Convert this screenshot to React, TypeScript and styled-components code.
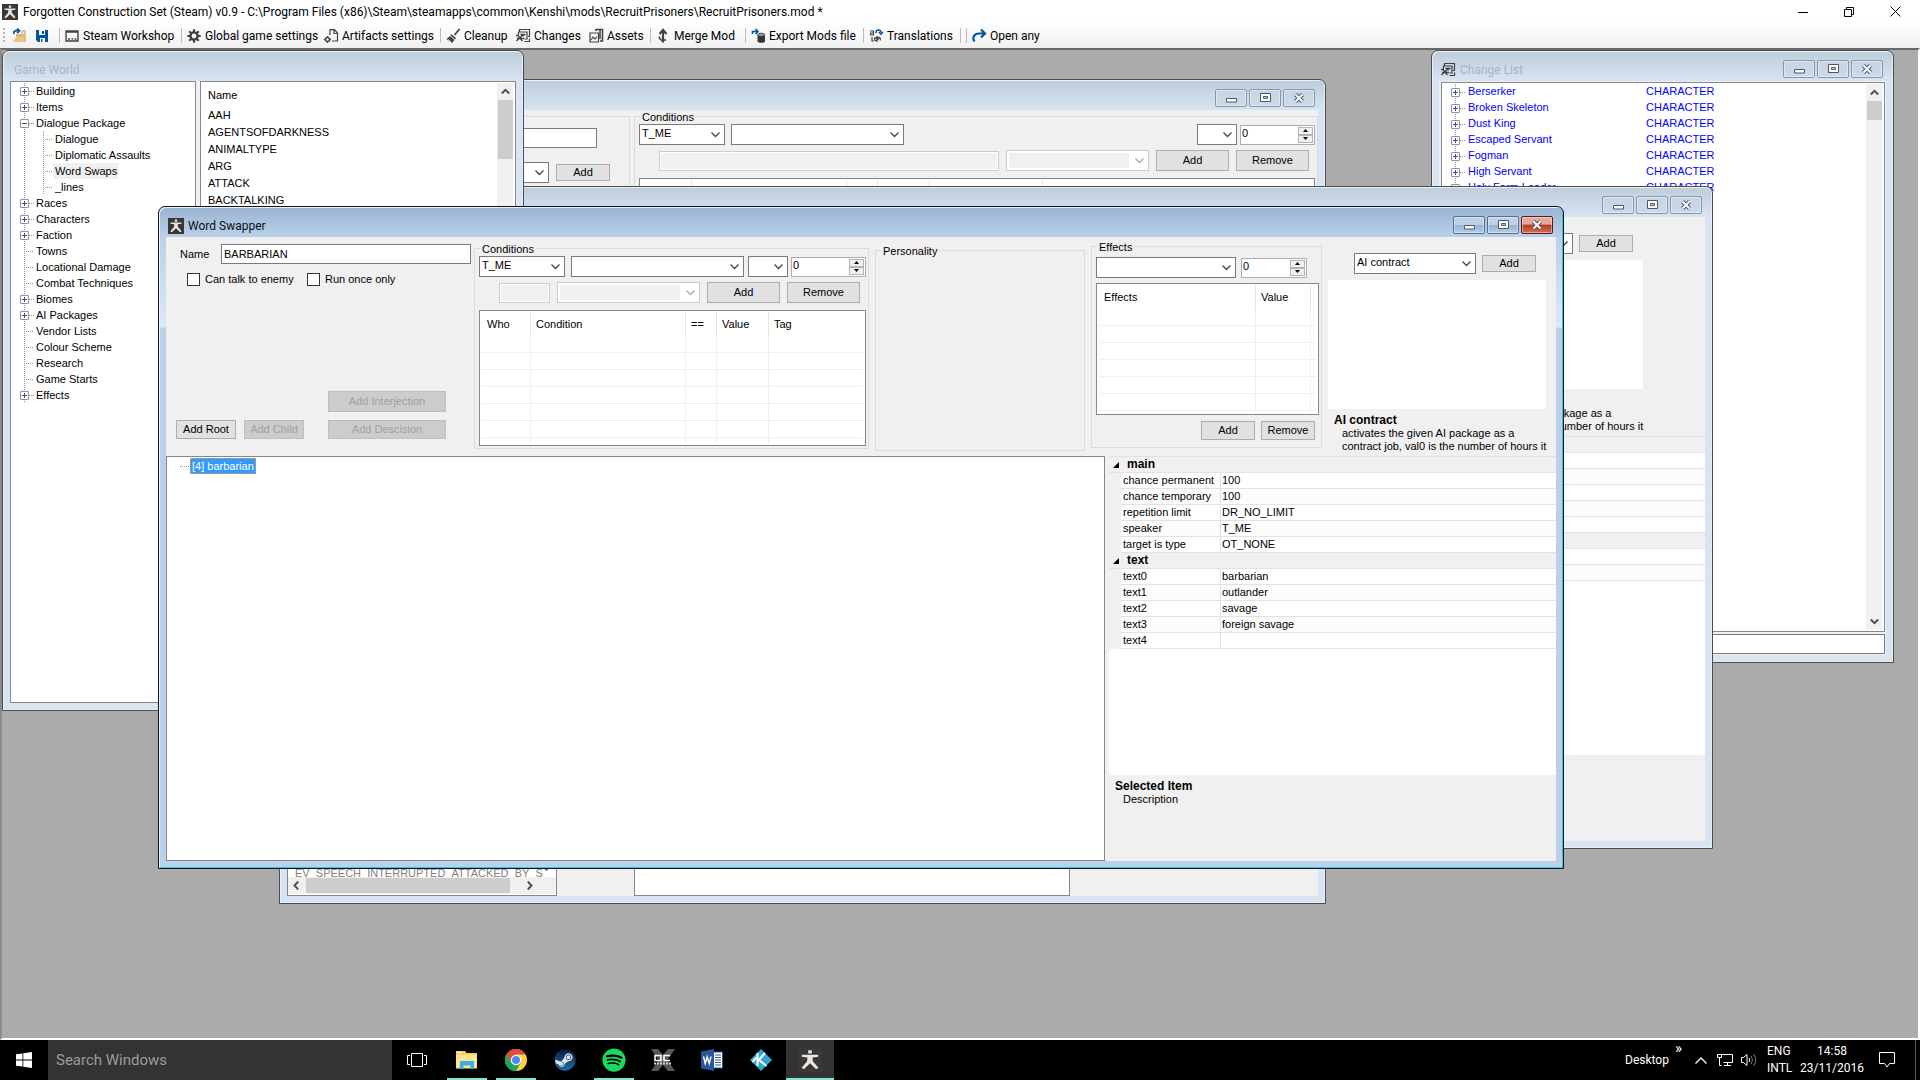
import React from "react";
import styled, { createGlobalStyle, css } from "styled-components";
import { FaSpotify, FaSteam } from "react-icons/fa";

const SANS = `"Liberation Sans", Arial, sans-serif`;
const SEGOE = `Roboto, "Open Sans", sans-serif`;

const chevron = (color: string) =>
  `url("data:image/svg+xml,%3Csvg xmlns='http://www.w3.org/2000/svg' width='9' height='6'%3E%3Cpath d='M.5 .5l4 4 4-4' fill='none' stroke='%23${color}' stroke-width='1.3'/%3E%3C/svg%3E")`;

const Global = createGlobalStyle`
  *, *::before, *::after { box-sizing: border-box; }
  body { margin: 0; overflow: hidden; font: 11px/13px ${SANS}; color: #000; }
  button, input, select { font: inherit; color: inherit; margin: 0; padding: 0; border-radius: 0; }
  ul { list-style: none; margin: 0; padding: 0; }
`;

/* ---------- application shell ---------- */

const Shell = styled.div`
  display: flex;
  flex-direction: column;
  height: 100vh;
  background: #fff;
`;

const AppTitle = styled.header`
  display: flex;
  align-items: center;
  height: 23px;
  padding: 0 2px;
  gap: 5px;
  font: 12px/16px ${SEGOE};
`;

const AppTitleText = styled.h1`
  flex: 1;
  margin: 0;
  font: inherit;
`;

const CaptionButtons = styled.div`
  display: flex;
`;

const CaptionButton = styled.button`
  width: 46px;
  height: 22px;
  border: 0;
  background: none;
  display: grid;
  place-items: center;
`;

const ToolStrip = styled.nav`
  display: flex;
  align-items: center;
  height: 25px;
  padding-left: 3px;
  background: linear-gradient(#fdfdfd, #f1f1f1);
  font: 12px/16px ${SEGOE};
`;

const Grip = styled.span`
  width: 2px;
  height: 16px;
  margin-right: 7px;
  background: repeating-linear-gradient(#b5b5b5 0 2px, transparent 2px 4px);
`;

const ToolButton = styled.button<{ $w: number }>`
  display: flex;
  align-items: center;
  gap: 3px;
  width: ${(p) => p.$w}px;
  height: 22px;
  border: 0;
  background: none;
  white-space: nowrap;
  svg { flex: none; }
`;

const ToolSep = styled.span`
  width: 1px;
  height: 15px;
  margin-right: 5px;
  background: #bdbdbd;
`;

const Mdi = styled.main`
  position: relative;
  flex: 1;
  overflow: hidden;
  background: #ababab;
  border: 2px solid #fff;
  border-top-color: #696969;
  border-left-color: #8c8c8c;
`;

/* ---------- child windows ---------- */

const Win = styled.section<{ $x: number; $y: number; $w: number; $h: number; $active?: boolean }>`
  position: absolute;
  left: ${(p) => p.$x}px;
  top: ${(p) => p.$y}px;
  width: ${(p) => p.$w}px;
  height: ${(p) => p.$h}px;
  display: flex;
  flex-direction: column;
  padding: 0 7px 7px;
  border-radius: 7px 7px 0 0;
  ${(p) =>
    p.$active
      ? css`
          border: 1px solid #101418;
          background: linear-gradient(#9ab4d2, #b9d1ea 30px, #dce9f8 120px, #b9d1ea 121px);
          box-shadow: inset 1px 1px 0 #e8f1fa, inset -1px -1px 0 #35c5e0;
        `
      : css`
          border: 1px solid #4c4c4c;
          background: linear-gradient(#bfcddb, #d7e4f2 30px);
          box-shadow: inset 1px 1px 0 #e9f0f7, inset -1px -1px 0 #e4ecf5;
        `}
`;

const WinTitle = styled.header<{ $dim?: boolean }>`
  display: flex;
  flex: none;
  align-items: center;
  gap: 4px;
  height: 30px;
  padding: 8px 3px 0 2px;
  font: 12px/16px ${SEGOE};
  color: ${(p) => (p.$dim ? "#a9b4bf" : "#101010")};
`;

const WinName = styled.h2<{ $indent?: boolean }>`
  flex: 1;
  margin: 0;
  padding-left: ${(p) => (p.$indent ? 2 : 0)}px;
  font: inherit;
`;

const WinButtons = styled.div`
  display: flex;
  gap: 2px;
  margin-top: -3px;
`;

const WinButton = styled.button<{ $tone: "idle" | "blue" | "red" }>`
  display: grid;
  place-items: center;
  width: 32px;
  height: 18px;
  border-radius: 2px;
  border: 1px solid ${(p) => ({ idle: "#8797ad", blue: "#56708f", red: "#5b1a17" })[p.$tone]};
  box-shadow: inset 0 0 0 1px rgba(255, 255, 255, 0.4);
  background: ${(p) =>
    ({
      idle: "linear-gradient(#c6d4e3, #cbd9e8)",
      blue: "linear-gradient(#bdd0e6 0 48%, #97b3d3 50%, #b5cde6)",
      red: "linear-gradient(#e5a79b 0 45%, #b8391f 50%, #d0705c)",
    })[p.$tone]};
`;

const Client = styled.div`
  flex: 1;
  min-height: 0;
  display: flex;
  flex-direction: column;
  background: #f0f0f0;
`;

const WorldClient = styled(Client)`
  flex-direction: row;
  gap: 4px;
`;

/* ---------- controls ---------- */

const Push = styled.button<{ $w: number; $h?: number }>`
  flex: none;
  width: ${(p) => p.$w}px;
  height: ${(p) => p.$h ?? 21}px;
  border: 1px solid #adadad;
  background: #e1e1e1;
  &:disabled { border-color: #bfbfbf; background: #ccc; color: #a0a0a0; }
`;

const Text = styled.input<{ $w?: number }>`
  ${(p) => (p.$w ? `width: ${p.$w}px; flex: none;` : "flex: 1; min-width: 0; width: 0;")}
  height: 20px;
  border: 1px solid #7a7a7a;
  padding: 0 2px;
  background: #fff;
  &:disabled { border-color: #ccc; background: #f0f0f0; box-shadow: inset 0 0 0 1px #fff; }
`;

const FullText = styled(Text)`
  flex: none;
  width: 100%;
`;

const Combo = styled.select<{ $w: number }>`
  flex: none;
  width: ${(p) => p.$w}px;
  height: 21px;
  padding: 0 18px 2px 2px;
  appearance: none;
  border: 1px solid #7a7a7a;
  background: #fff ${chevron("444")} no-repeat right 4px center;
  &:disabled {
    opacity: 1;
    border-color: #ccc;
    background: ${chevron("aaa")} no-repeat right 4px center,
      linear-gradient(#fff, #fff) no-repeat right / 19px 100%, #f0f0f0;
    box-shadow: inset 0 0 0 2px #fff;
  }
`;

const SpinBox = styled.div<{ $w: number }>`
  display: flex;
  flex: none;
  width: ${(p) => p.$w}px;
  height: 20px;
  padding: 1px;
  border: 1px solid #abadb3;
  background: #fff;
`;

const SpinInput = styled.input`
  flex: 1;
  min-width: 0;
  width: 0;
  border: 0;
  padding-bottom: 2px;
  background: none;
`;

const SpinArrows = styled.div`
  display: grid;
  grid-template-rows: 1fr 1fr;
  width: 15px;
`;

const SpinArrow = styled.button`
  display: grid;
  place-items: center;
  border: 1px solid #b4b4b4;
  background: #f0f0f0;
  overflow: hidden;
`;

const Spin = ({ w, label }: { w: number; label: string }) => (
  <SpinBox $w={w}>
    <SpinInput defaultValue="0" aria-label={label} inputMode="numeric" />
    <SpinArrows>
      <SpinArrow aria-label="Increase"><svg width="5" height="3"><path d="M0 3L2.5 0 5 3z" /></svg></SpinArrow>
      <SpinArrow aria-label="Decrease"><svg width="5" height="3"><path d="M0 0L2.5 3 5 0z" /></svg></SpinArrow>
    </SpinArrows>
  </SpinBox>
);

const Group = styled.fieldset<{ $w?: number; $h?: number; $top: number }>`
  min-width: 0;
  ${(p) => (p.$w ? `flex: none; width: ${p.$w}px;` : "flex: 1;")}
  ${(p) => (p.$h ? `height: ${p.$h}px;` : "")}
  margin: ${(p) => p.$top}px 0 0;
  padding: 1px 2px 0 4px;
  border: 1px solid #dcdcdc;
`;

const Legend = styled.legend`
  margin-left: 1px;
  padding: 1px 2px 0;
  height: 13px;
`;

const Line = styled.div<{ $mt?: number; $pl?: number; $pr?: number; $gap?: number; $end?: boolean }>`
  display: flex;
  align-items: center;
  gap: ${(p) => p.$gap ?? 6}px;
  margin-top: ${(p) => p.$mt ?? 0}px;
  padding: 0 ${(p) => p.$pr ?? 0}px 0 ${(p) => p.$pl ?? 0}px;
  justify-content: ${(p) => (p.$end ? "flex-end" : "flex-start")};
`;

const Spread = styled.div`
  display: flex;
  align-items: center;
  justify-content: space-between;
`;

const Sunken = styled.div<{ $mt?: number; $h?: number; $w?: number; $grow?: boolean }>`
  display: flex;
  ${(p) => (p.$grow ? "flex: 1; min-width: 0;" : "")}
  ${(p) => (p.$w ? `flex: none; width: ${p.$w}px;` : "")}
  ${(p) => (p.$h ? `height: ${p.$h}px;` : "")}
  margin-top: ${(p) => p.$mt ?? 0}px;
  border: 1px solid #828790;
  background: #fff;
  overflow: hidden;
`;

const Grid = styled.table<{ $lines?: boolean }>`
  flex: 1;
  width: 100%;
  height: max-content;
  margin: 1px 2px;
  table-layout: fixed;
  border-collapse: separate;
  border-spacing: 0;
  th, td {
    padding: 0 0 0 5px;
    text-align: left;
    font-weight: 400;
    white-space: nowrap;
    overflow: hidden;
  }
  th { height: 24px; border-right: 1px solid ${(p) => (p.$lines ? "#e5e5e5" : "transparent")}; }
  td { height: 17px; }
  ${(p) =>
    p.$lines &&
    css`
      td { border-right: 1px solid #f0f0f0; border-bottom: 1px solid #f0f0f0; }
      th:last-child, td:last-child { border-right: 0; }
    `}
`;

const ListGrid = ({ cols }: { cols: [string, number?][] }) => (
  <Grid $lines>
    <colgroup>{cols.map(([, w], i) => <col key={i} width={w} />)}</colgroup>
    <thead><tr>{cols.map(([name], i) => <th key={i}>{name}</th>)}</tr></thead>
    <tbody>
      {Array.from({ length: 7 }, (_, r) => (
        <tr key={r}>{cols.map((_, i) => <td key={i} />)}</tr>
      ))}
    </tbody>
  </Grid>
);

/* ---------- scroll bars ---------- */

const VTrack = styled.div`
  display: flex;
  flex-direction: column;
  align-items: center;
  flex: none;
  width: 16px;
  margin: 1px 2px 1px 0;
  background: #f0f0f0;
`;

const ScrollArrow = styled.button`
  display: grid;
  place-items: center;
  flex: none;
  width: 16px;
  height: 17px;
  border: 0;
  background: #f0f0f0;
`;

const Thumb = styled.span<{ $h: number }>`
  width: 15px;
  height: ${(p) => p.$h}px;
  margin-bottom: auto;
  background: #cdcdcd;
`;

const HTrack = styled.div`
  display: flex;
  align-items: center;
  height: 17px;
  background: #f0f0f0;
`;

const HThumb = styled.span`
  width: 204px;
  height: 15px;
  margin: 0 11px 0 2px;
  background: #cdcdcd;
`;

const Arrow = ({ d }: { d: string }) => (
  <svg width="9" height="9" viewBox="0 0 9 9"><path d={d} fill="none" stroke="#505050" strokeWidth="2" /></svg>
);
const UP = "M.8 6.5L4.5 2.8 8.2 6.5";
const DOWN = "M.8 2.5L4.5 6.2 8.2 2.5";
const LEFT = "M6.2 .5L2.5 4.5 6.2 8.5";
const RIGHT = "M2.8 .5L6.5 4.5 2.8 8.5";

const VScroll = ({ thumb }: { thumb: number }) => (
  <VTrack>
    <ScrollArrow aria-label="Scroll up"><Arrow d={UP} /></ScrollArrow>
    <Thumb $h={thumb} />
    <ScrollArrow aria-label="Scroll down"><Arrow d={DOWN} /></ScrollArrow>
  </VTrack>
);

/* ---------- trees ---------- */

const TreeList = styled.ul`
  flex: 1;
  padding: 1px 0 0 9px;
`;

const TreeRow = styled.li<{ $child?: boolean }>`
  display: flex;
  align-items: center;
  height: 16px;
  padding-left: ${(p) => (p.$child ? 23 : 0)}px;
  background: linear-gradient(#909090 50%, transparent 50%) 4px 0 / 1px 2px repeat-y;
`;

const Branch = styled.span<{ $w: number; $rail?: boolean }>`
  width: ${(p) => p.$w}px;
  height: 16px;
  background: linear-gradient(90deg, #909090 50%, transparent 50%) 0 8px / 2px 1px repeat-x
    ${(p) => (p.$rail ? ", linear-gradient(#909090 50%, transparent 50%) 0 0 / 1px 2px repeat-y" : "")};
`;

const Stub = styled.span`
  width: 4px;
`;

const Toggle = styled.button`
  display: grid;
  place-items: center;
  flex: none;
  width: 9px;
  height: 9px;
  border: 1px solid #919191;
  border-radius: 1px;
  background: #fff;
`;

const TreeLabel = styled.span<{ $sel?: boolean }>`
  padding: 2px 2px 1px;
  background: ${(p) => (p.$sel ? "#f0f0f0" : "none")};
`;

const BlueLabel = styled.span<{ $w?: number }>`
  width: ${(p) => (p.$w ? `${p.$w}px` : "auto")};
  padding: 1px 2px 2px;
  color: #00f;
`;

const Box = ({ open, name }: { open?: boolean; name: string }) => (
  <Toggle aria-label={(open ? "Collapse " : "Expand ") + name}>
    <svg width="5" height="5" viewBox="0 0 5 5"><path d={open ? "M0 2.5h5" : "M0 2.5h5M2.5 0v5"} stroke="#33509c" /></svg>
  </Toggle>
);

type Node = { t: string; k: "+" | "-" | "" | "child"; sel?: boolean };
const worldTree: Node[] = [
  { t: "Building", k: "+" }, { t: "Items", k: "+" }, { t: "Dialogue Package", k: "-" },
  { t: "Dialogue", k: "child" }, { t: "Diplomatic Assaults", k: "child" },
  { t: "Word Swaps", k: "child", sel: true }, { t: "_lines", k: "child" },
  { t: "Races", k: "+" }, { t: "Characters", k: "+" }, { t: "Faction", k: "+" },
  { t: "Towns", k: "" }, { t: "Locational Damage", k: "" }, { t: "Combat Techniques", k: "" },
  { t: "Biomes", k: "+" }, { t: "AI Packages", k: "+" }, { t: "Vendor Lists", k: "" },
  { t: "Colour Scheme", k: "" }, { t: "Research", k: "" }, { t: "Game Starts", k: "" }, { t: "Effects", k: "+" },
];

/* ---------- icons ---------- */

const Figure = ({ size }: { size: number }) => (
  <svg width={size} height={size} viewBox="0 0 16 16">
    <path d="M0 0h16v16H0z" fill="#3a3734" />
    <path d="M6.8 1.5h2.4v2.2H6.800zM2.500 4.500h11v1.300l-3.800.5.2 2.500 3.700 4.400-1.500 1L8 10.200l-4.100 4-1.500-1L6.100 8.800l.2-2.500-3.800-.5z" fill="#e6e6e6" />
  </svg>
);

const I = ({ children, w = 15 }: { children: React.ReactNode; w?: number }) => (
  <svg width={w} height="16" viewBox={`0 0 ${w} 16`} fill="none" stroke="#424242" strokeWidth="1.4">{children}</svg>
);

const icons = {
  open: <I><path d="M4 14V6h9v8z" fill="#dcb67a" stroke="none" /><path d="M1 14l3-5h8l2.5 5z" fill="#e9c58c" stroke="none" /><path d="M10 6V3h3v10" stroke="#dcb67a" /><path d="M2 6c-1-3 2-4 5-3.500M5 .5l2.500 2.300L5 5" stroke="#00539c" strokeWidth="1.700" /></I>,
  save: <I><path d="M1 2h12v12H3l-2-2z" fill="#00539c" stroke="none" /><path d="M4 2h6v5H4zM5 10h5v4H5z" fill="#fff" stroke="none" /><path d="M7 3h2v3H7zM6 11h1.500v3H6z" fill="#00539c" stroke="none" /></I>,
  workshop: <I><path d="M1 3h12v10H1zM1 4h12" /><path d="M3 11h2M6.500 11h1.500M9.500 11h2" /></I>,
  gear: <I><circle cx="7" cy="8" r="3.600" strokeWidth="2.400" /><path d="M7 1.200v3M7 11.800v3M.3 8h3M10.700 8h3M2.300 3.300l2 2M9.700 10.700l2 2M11.700 3.300l-2 2M4.300 10.700l-2 2" strokeWidth="2" /></I>,
  artifacts: <I><path d="M6 7V1.700h4.500L13.500 5v8H8M10 2v3.500h3" strokeWidth="1.200" /><circle cx="3.500" cy="11.500" r="2" /><path d="M3.500 8v1.500M3.500 13.500V15M0 11.500h1.500M5.500 11.500H7" /></I>,
  broom: <I><path d="M13.500 1L8.500 7" strokeWidth="1.800" /><path d="M5 6l5 4-1 1.500L4.500 7.500zM4 8l4.500 4-2.500 3L.5 11z" fill="#424242" stroke="none" /><path d="M2 11.500l3 2.300" stroke="#fff" strokeWidth=".8" /></I>,
  changes: <I><path d="M3.500 3.500V1.500h10v7H12M2.500 7V4h8.500v7H8.500M8.500 13.500h5v-3" strokeWidth="1.200" /><path d="M0 7.500h2l2 2.500 2-2.500h2M.5 13l3-3 3 3M1 10.500h7M4.500 6.500h5" strokeWidth="1.300" /></I>,
  assets: <I><path d="M1 5h8.500v9H1z" strokeWidth="1.200" /><path d="M2 12l2-3 2 2 2-2.500" strokeWidth="1.100" /><path d="M7 3V1.500h6.500V13H11M11 2v9" strokeWidth="1.500" /></I>,
  merge: <I><path d="M7 14.500V3M3.500 6L7 2l3.500 4" strokeWidth="2.200" /><path d="M3.500 8.500v2l3.500 3M7 12h3" strokeWidth="1.600" /></I>,
  exportMod: <I><path d="M1.500 6V3.500h4.500M4.500 1L7 3.500 4.500 6" stroke="#00539c" strokeWidth="1.600" /><path d="M6.500 7.500h7.500v6c-1 1.800-6.500 1.800-7.500 0z" fill="#333" stroke="none" /><ellipse cx="10.200" cy="6.800" rx="3.700" ry="1.600" fill="#999" stroke="#333" strokeWidth=".8" /></I>,
  translate: <I><path d="M1 3h3.500v4H1.500V5h3" strokeWidth="1.100" /><path d="M7 5c0-4 5-4 5-.5M9.800 4l2.200 2.200L14 4" stroke="#00539c" strokeWidth="1.500" /><path d="M5 10h6M8 8v6M10.500 9.500c-3 5-6 3-4.500.8s7-1.300 5 2.200M3 9v4h2" strokeWidth="1.200" /></I>,
  redo: <I><path d="M2.500 13.500C-.5 9 3 5.500 7 5.500h5M9 1.500l4 4-4 4" stroke="#00539c" strokeWidth="2.200" /></I>,
};

const CtlButtons = ({ active }: { active?: boolean }) => (
  <WinButtons>
    <WinButton $tone={active ? "blue" : "idle"} aria-label="Minimize">
      <svg width="11" height="11"><path d="M.5 6.500h10v3.500H.5z" fill="#fff" stroke="#4e5566" /></svg>
    </WinButton>
    <WinButton $tone={active ? "blue" : "idle"} aria-label="Maximize">
      <svg width="11" height="9"><path d="M.5 .5h10v8H.5zM3.500 3.500h4v2h-4z" fill="#fff" fillRule="evenodd" stroke="#4e5566" /></svg>
    </WinButton>
    <WinButton $tone={active ? "red" : "idle"} aria-label="Close">
      <svg width="12" height="10"><path d="M2.500 1.500l7 7M9.500 1.500l-7 7" stroke="#4e5566" strokeWidth="4" /><path d="M2.500 1.500l7 7M9.500 1.500l-7 7" stroke="#fff" strokeWidth="2" /></svg>
    </WinButton>
  </WinButtons>
);

/* ---------- dialogue editor form ---------- */

const ConditionsGroup = ({ w, h, top, extra }: { w?: number; h?: number; top: number; extra?: boolean }) => (
  <Group $w={w} $h={h} $top={top}>
    <Legend>Conditions</Legend>
    <Spread>
      <Line>
        <Combo $w={86} aria-label="Who"><option>T_ME</option></Combo>
        <Combo $w={173} aria-label="Condition"><option /></Combo>
      </Line>
      <Line $gap={3}>
        <Combo $w={40} aria-label="Operator"><option /></Combo>
        <Spin w={75} label="Condition value" />
      </Line>
    </Spread>
    <Line $mt={5} $pl={20} $pr={6} $gap={7}>
      <Text disabled aria-label="Tag text" />
      <Combo $w={143} disabled aria-label="Tag"><option /></Combo>
      <Push $w={73}>Add</Push>
      <Push $w={73}>Remove</Push>
    </Line>
    <Sunken $mt={7} $h={136}>
      <ListGrid
        cols={
          extra
            ? [["Who", 50], ["Condition", 155], ["==", 31], ["Value", 52], ["Tag", 113], [""]]
            : [["Who", 49], ["Condition", 155], ["==", 31], ["Value", 52], ["Tag"]]
        }
      />
    </Sunken>
  </Group>
);

const FormTop = styled.div`
  display: flex;
  align-items: flex-start;
  gap: 6px;
  flex: none;
  height: 219px;
`;

const RootPane = styled.div`
  display: flex;
  flex-direction: column;
  flex: none;
  width: 302px;
  height: 202px;
  padding: 7px 0 0 10px;
`;

const NameRow = styled.div`
  display: grid;
  grid-template-columns: 41px 250px;
  align-items: center;
  padding-left: 4px;
`;

const Checks = styled.div`
  display: grid;
  grid-template-columns: 120px 1fr;
  padding: 9px 0 0 11px;
`;

const CheckLabel = styled.label`
  display: flex;
  align-items: center;
  gap: 5px;
`;

const Check = styled.input`
  appearance: none;
  width: 13px;
  height: 13px;
  border: 1px solid #333;
  background: #fff;
`;

const RootButtons = styled.div`
  display: grid;
  grid-template-columns: 60px 60px 118px;
  column-gap: 8px;
  row-gap: 8px;
  margin-top: auto;
  align-items: end;
  button:nth-child(1) { grid-column: 3; }
  button:nth-child(1), button:nth-child(4) { margin-left: 16px; }
`;

const ContractPane = styled.div`
  flex: 1;
  min-width: 0;
  padding-top: 16px;
`;

const WhiteBox = styled.div`
  width: 218px;
  height: 129px;
  margin: 6px 0 5px;
  background: #fff;
`;

const Note = styled.div`
  padding-left: 6px;
  white-space: nowrap;
`;

const Strong = styled.h3`
  margin: 0;
  font: bold 12px/13px ${SANS};
`;

const NoteBody = styled.p`
  margin: 0;
  padding-left: 8px;
`;

const FormBottom = styled.div`
  display: flex;
  flex: 1;
  min-height: 0;
  gap: 4px;
`;

const RootLabel = styled.span`
  padding: 0 1px;
  height: 16px;
  line-height: 14px;
  border: 1px dotted #f0a030;
  background: #3399ff;
  color: #fff;
`;

const RootRow = styled.li`
  display: flex;
  padding-left: 4px;
`;

const PropPane = styled.div`
  display: flex;
  flex-direction: column;
  flex: none;
  width: 447px;
  background: #fff;
`;

const Props = styled.table`
  width: 100%;
  table-layout: fixed;
  border-collapse: separate;
  border-spacing: 0;
  border-top: 1px solid #e2e2e2;
  td, th { height: 16px; padding: 0 0 0 2px; text-align: left; font-weight: 400; white-space: nowrap; line-height: 13px; }
`;

const Gutter = styled.td`
  background: #f0f0f0;
`;

const Cat = styled.th`
  background: #f0f0f0;
  border-bottom: 1px solid #e2e2e2;
  ${Strong} { display: flex; align-items: center; gap: 7px; padding-left: 2px; }
`;

const PropRow = styled.tr<{ $alt: boolean }>`
  th, td:last-child { border-bottom: 1px solid #e2e2e2; background: ${(p) => (p.$alt ? "#fcfcfc" : "#fff")}; }
  th { border-right: 1px solid #e2e2e2; }
  td:last-child { padding-left: 1px; }
`;

const HelpPane = styled.div`
  height: 86px;
  margin-top: auto;
  padding: 5px 6px;
  background: #f0f0f0;
`;

const mainProps: [string, string][] = [
  ["chance permanent", "100"], ["chance temporary", "100"], ["repetition limit", "DR_NO_LIMIT"],
  ["speaker", "T_ME"], ["target is type", "OT_NONE"],
];
const textProps: [string, string][] = [
  ["text0", "barbarian"], ["text1", "outlander"], ["text2", "savage"], ["text3", "foreign savage"], ["text4", ""],
];

const Section = ({ name, rows }: { name: string; rows: [string, string][] }) => (
  <tbody>
    <tr>
      <Cat colSpan={3}>
        <Strong><svg width="7" height="6"><path d="M6 0v6H0z" /></svg>{name}</Strong>
      </Cat>
    </tr>
    {rows.map(([k, v], i) => (
      <PropRow key={k} $alt={i % 2 === 1}><Gutter /><th>{k}</th><td>{v}</td></PropRow>
    ))}
  </tbody>
);

const EditorForm = ({ id, name, texts }: { id: string; name: string; texts: [string, string][] }) => (
  <Client>
    <FormTop>
      <RootPane>
        <NameRow>
          <label htmlFor={id + "-name"}>Name</label>
          <Text id={id + "-name"} $w={250} defaultValue={name} />
        </NameRow>
        <Checks>
          <CheckLabel><Check type="checkbox" />Can talk to enemy</CheckLabel>
          <CheckLabel><Check type="checkbox" />Run once only</CheckLabel>
        </Checks>
        <RootButtons>
          <Push $w={118} disabled>Add Interjection</Push>
          <Push $w={60} $h={19}>Add Root</Push>
          <Push $w={60} $h={19} disabled>Add Child</Push>
          <Push $w={118} $h={19} disabled>Add Descision</Push>
        </RootButtons>
      </RootPane>
      <ConditionsGroup w={395} h={207} top={5} />
      <Group $w={210} $h={207} $top={7}><Legend>Personality</Legend></Group>
      <Group $w={231} $h={208} $top={3}>
        <Legend>Effects</Legend>
        <Line $mt={3} $gap={5}>
          <Combo $w={140} aria-label="Effect"><option /></Combo>
          <Spin w={66} label="Effect value" />
        </Line>
        <Sunken $mt={5} $h={132}>
          <ListGrid cols={[["Effects", 157], ["Value", 55], [""]]} />
        </Sunken>
        <Line $mt={6} $end $pr={4}>
          <Push $w={54} $h={19}>Add</Push>
          <Push $w={54} $h={19}>Remove</Push>
        </Line>
      </Group>
      <ContractPane>
        <Line $pl={26}>
          <Combo $w={122} aria-label="AI package"><option>AI contract</option></Combo>
          <Push $w={54} $h={17}>Add</Push>
        </Line>
        <WhiteBox />
        <Note>
          <Strong>AI contract</Strong>
          <NoteBody>activates the given AI package as a<br />contract job, val0 is the number of hours it</NoteBody>
        </Note>
      </ContractPane>
    </FormTop>
    <FormBottom>
      <Sunken $grow>
        <TreeList>
          {name && <RootRow><Branch $w={10} /><RootLabel>[4] {name.toLowerCase()}</RootLabel></RootRow>}
        </TreeList>
      </Sunken>
      <PropPane>
        <Props>
          <colgroup><col width={12} /><col width={100} /><col /></colgroup>
          <Section name="main" rows={mainProps} />
          <Section name="text" rows={texts} />
        </Props>
        <HelpPane>
          <Strong>Selected Item</Strong>
          <NoteBody>Description</NoteBody>
        </HelpPane>
      </PropPane>
    </FormBottom>
  </Client>
);

/* ---------- dialogue window in the background ---------- */

const TalkTop = styled.div`
  display: flex;
  align-items: flex-start;
  gap: 4px;
`;

const TalkLeft = styled.fieldset`
  flex: none;
  width: 343px;
  height: 210px;
  margin: 6px 0 0;
  padding: 11px 19px 0;
  border: 1px solid #dcdcdc;
`;

const TalkBottom = styled.div`
  display: flex;
  flex: 1;
  align-items: stretch;
  gap: 77px;
`;

const EventPane = styled(Sunken)`
  flex-direction: column;
  justify-content: flex-end;
  padding-bottom: 1px;
`;

const EventRow = styled.div`
  display: flex;
  align-items: flex-start;
  justify-content: space-between;
  height: 14px;
  padding: 4px 6px 0 7px;
  color: #808080;
  white-space: nowrap;
  overflow: hidden;
`;

/* ---------- change list ---------- */

const ChangeClient = styled(Client)`
  padding: 1px 1px 1px 2px;
  gap: 2px;
`;

const changes = ["Berserker", "Broken Skeleton", "Dust King", "Escaped Servant", "Fogman", "High Servant", "Holy Farm Leader"];

/* ---------- taskbar ---------- */

const Taskbar = styled.footer`
  display: flex;
  flex: none;
  height: 40px;
  background: #000;
  color: #fff;
  font: 12px/17px ${SEGOE};
`;

const StartButton = styled.button`
  display: grid;
  place-items: center;
  width: 48px;
  border: 0;
  background: none;
`;

const Search = styled.input`
  width: 344px;
  border: 0;
  padding: 0 8px;
  background: #333;
  color: #fff;
  font: 15px/20px ${SEGOE};
  &::placeholder { color: #9b9b9b; opacity: 1; }
`;

const Task = styled.button<{ $run?: boolean; $on?: boolean; $w?: number }>`
  display: grid;
  place-items: center;
  width: ${(p) => p.$w ?? 40}px;
  margin: ${(p) => (p.$on ? "0" : "0 5px 0 4px")};
  padding-top: 2px;
  border: 0;
  border-bottom: 2px solid ${(p) => (p.$run ? "#85e6d3" : "transparent")};
  background: ${(p) => (p.$on ? "#333" : "none")};
`;

const Tray = styled.div`
  display: flex;
  align-items: center;
  margin-left: auto;
`;

const TrayText = styled.span<{ $w: number; $center?: boolean }>`
  width: ${(p) => p.$w}px;
  text-align: ${(p) => (p.$center ? "center" : "left")};
  white-space: nowrap;
`;

const More = styled.span`
  width: 20px;
  align-self: flex-start;
  font-size: 15px;
`;

const TrayIcon = styled.span<{ $w: number }>`
  display: grid;
  place-items: center start;
  width: ${(p) => p.$w}px;
`;

const NoticeIcon = styled.svg`
  margin-left: 14px;
`;

const PeekLine = styled.span`
  width: 5px;
  height: 40px;
  border-left: 1px solid #555;
`;

export default function App() {
  return (
    <Shell>
      <Global />
      <AppTitle>
        <Figure size={16} />
        <AppTitleText>
          Forgotten Construction Set (Steam) v0.9 - C:\Program Files (x86)\Steam\steamapps\common\Kenshi\mods\RecruitPrisoners\RecruitPrisoners.mod *
        </AppTitleText>
        <CaptionButtons>
          <CaptionButton aria-label="Minimize"><svg width="10" height="10"><path d="M0 5.500h10" stroke="#000" /></svg></CaptionButton>
          <CaptionButton aria-label="Restore"><svg width="10" height="10"><path d="M.5 2.500h7v7h-7zM2.500 2.500v-2h7v7h-2" fill="none" stroke="#000" /></svg></CaptionButton>
          <CaptionButton aria-label="Close"><svg width="11" height="11"><path d="M.5 .5l10 10M10.500 .5l-10 10" stroke="#000" /></svg></CaptionButton>
        </CaptionButtons>
      </AppTitle>
      <ToolStrip>
        <Grip />
        <ToolButton $w={23} aria-label="Open">{icons.open}</ToolButton>
        <ToolButton $w={24} aria-label="Save">{icons.save}</ToolButton>
        <ToolSep />
        <ToolButton $w={116}>{icons.workshop}Steam Workshop</ToolButton>
        <ToolSep />
        <ToolButton $w={137}>{icons.gear}Global game settings</ToolButton>
        <ToolButton $w={116}>{icons.artifacts}Artifacts settings</ToolButton>
        <ToolSep />
        <ToolButton $w={70}>{icons.broom}Cleanup</ToolButton>
        <ToolButton $w={73}>{icons.changes}Changes</ToolButton>
        <ToolButton $w={61}>{icons.assets}Assets</ToolButton>
        <ToolSep />
        <ToolButton $w={89}>{icons.merge}Merge Mod</ToolButton>
        <ToolSep />
        <ToolButton $w={112}>{icons.exportMod}Export Mods file</ToolButton>
        <ToolSep />
        <ToolButton $w={91}>{icons.translate}Translations</ToolButton>
        <ToolSep />
        <ToolSep />
        <ToolButton $w={80}>{icons.redo}Open any</ToolButton>
      </ToolStrip>

      <Mdi>
        <Win $x={1429} $y={0} $w={463} $h={613}>
          <WinTitle $dim>
            {icons.changes}
            <WinName>Change List</WinName>
            <CtlButtons />
          </WinTitle>
          <ChangeClient>
            <Sunken $grow>
              <TreeList>
                {changes.map((c) => (
                  <TreeRow key={c}>
                    <Box name={c} />
                    <Branch $w={6} />
                    <BlueLabel $w={178}>{c}</BlueLabel>
                    <BlueLabel>CHARACTER</BlueLabel>
                  </TreeRow>
                ))}
              </TreeList>
              <VScroll thumb={19} />
            </Sunken>
            <FullText aria-label="Change details" />
          </ChangeClient>
        </Win>

        <Win $x={277} $y={29} $w={1047} $h={825}>
          <WinTitle><WinName /><CtlButtons /></WinTitle>
          <Client>
            <TalkTop>
              <TalkLeft>
                <Line $end $pr={13}><Text $w={250} aria-label="Dialogue name" /></Line>
                <Line $mt={14} $end $gap={7}>
                  <Combo $w={122} aria-label="Dialogue event"><option /></Combo>
                  <Push $w={54} $h={17}>Add</Push>
                </Line>
              </TalkLeft>
              <ConditionsGroup top={0} extra />
            </TalkTop>
            <TalkBottom>
              <EventPane $w={270}>
                <EventRow>
                  <span>EV_SPEECH_INTERRUPTED_ATTACKED_BY_S</span>
                  <svg width="7" height="4"><path d="M0 0h7L3.500 4z" fill="#505050" /></svg>
                </EventRow>
                <HTrack>
                  <ScrollArrow aria-label="Scroll left"><Arrow d={LEFT} /></ScrollArrow>
                  <HThumb />
                  <ScrollArrow aria-label="Scroll right"><Arrow d={RIGHT} /></ScrollArrow>
                </HTrack>
              </EventPane>
              <Sunken $w={436} />
            </TalkBottom>
          </Client>
        </Win>

        <Win $x={253} $y={136} $w={1458} $h={663}>
          <WinTitle><WinName /><CtlButtons /></WinTitle>
          <EditorForm id="other" name="" texts={textProps.slice(0, 2).map(([k]) => [k, ""])} />
        </Win>

        <Win $x={0} $y={0} $w={522} $h={661}>
          <WinTitle $dim><WinName $indent>Game World</WinName></WinTitle>
          <WorldClient>
            <Sunken $w={186}>
              <TreeList>
                {worldTree.map((n) => (
                  <TreeRow key={n.t} $child={n.k === "child"}>
                    {n.k === "child" ? (
                      <><Branch $w={10} $rail /><TreeLabel $sel={n.sel}>{n.t}</TreeLabel></>
                    ) : n.k === "" ? (
                      <><Stub /><Branch $w={10} /><TreeLabel>{n.t}</TreeLabel></>
                    ) : (
                      <><Box name={n.t} open={n.k === "-"} /><Branch $w={5} /><TreeLabel>{n.t}</TreeLabel></>
                    )}
                  </TreeRow>
                ))}
              </TreeList>
            </Sunken>
            <Sunken $grow>
              <Grid>
                <thead><tr><th>Name</th></tr></thead>
                <tbody>
                  {["AAH", "AGENTSOFDARKNESS", "ANIMALTYPE", "ARG", "ATTACK", "BACKTALKING"].map((w) => (
                    <tr key={w}><td>{w}</td></tr>
                  ))}
                </tbody>
              </Grid>
              <VScroll thumb={59} />
            </Sunken>
          </WorldClient>
        </Win>

        <Win $x={156} $y={156} $w={1406} $h={663} $active>
          <WinTitle>
            <Figure size={16} />
            <WinName>Word Swapper</WinName>
            <CtlButtons active />
          </WinTitle>
          <EditorForm id="swap" name="BARBARIAN" texts={textProps} />
        </Win>
      </Mdi>

      <Taskbar>
        <StartButton aria-label="Start">
          <svg width="16" height="16" viewBox="0 0 16 16" fill="#fff"><path d="M0 2.300l6.500-.9v6.200H0zM7.300 1.300L16 0v7.600H7.300zM0 8.400h6.500v6.200L0 13.700zM7.300 8.400H16V16l-8.700-1.300z" /></svg>
        </StartButton>
        <Search placeholder="Search Windows" aria-label="Search Windows" />
        <Task $w={42} aria-label="Task view">
          <svg width="20" height="14" fill="none" stroke="#fff"><path d="M4.500 .5h11v13h-11zM3 2.500H.5v9H3M17 2.500h2.500v9H17" /></svg>
        </Task>
        <Task $run aria-label="File Explorer">
          <svg width="22" height="20"><path d="M0 1h9l1.500 2H21v15H0z" fill="#f5cf62" /><path d="M0 5h21v13.500H0z" fill="#fde492" /><path d="M1.500 2h4v1h-4z" fill="#fff" /><path d="M4 19v-8h14v8h-3.500v-3.500h-7V19z" fill="#3bb0e6" /></svg>
        </Task>
        <Task $run aria-label="Chrome">
          <svg width="22" height="22" viewBox="-11 -11 22 22">
            <circle r="11" fill="#fdd23b" />
            <path d="M9.530 -5.500A11 11 0 0 0 -9.530 -5.500L-4.760 2.750 0 -5.500z" fill="#de4a3c" />
            <path d="M-9.530 -5.500A11 11 0 0 0 0 11L4.760 2.750 -4.760 2.750z" fill="#1ea362" />
            <circle r="5.200" fill="#fff" /><circle r="4" fill="#4a8af4" />
          </svg>
        </Task>
        <Task aria-label="Steam">
          <svg width="22" height="22" viewBox="0 0 22 22">
            <defs><linearGradient id="steamBlue" x1="0" y1="0" x2="0" y2="1"><stop offset="0" stopColor="#10193c" /><stop offset="1" stopColor="#1b6fa8" /></linearGradient></defs>
            <circle cx="11" cy="11" r="10" fill="#dfe6ee" />
            <FaSteam size={22} fill="url(#steamBlue)" />
          </svg>
        </Task>
        <Task $run aria-label="Spotify"><FaSpotify size={24} color="#1ed760" /></Task>
        <Task aria-label="DC Universe">
          <svg width="24" height="22" viewBox="0 0 24 22">
            <path d="M0 0h7l5 6 5-6h7l-7.500 11L24 22h-7l-5-6-5 6H0l7.500-11z" fill="#55585a" />
            <path d="M4 6.500h6v5H4zM19 6.500h-6v5h6" fill="none" stroke="#fff" strokeWidth="1.600" />
            <path d="M3 14.500h18" stroke="#ccc" strokeWidth="2" strokeDasharray="2 1" />
          </svg>
        </Task>
        <Task aria-label="Word">
          <svg width="22" height="22">
            <path d="M11 3h10.500v16H11z" fill="#fff" stroke="#2b579a" /><path d="M14 6h6M14 8.500h6M14 11h6M14 13.500h6M14 16h6" stroke="#2b579a" />
            <path d="M0 2.500L13 0v22L0 19.500z" fill="#2b579a" /><path d="M2.500 7.500l1.700 7 2-6.500 2 6.500 1.800-7" fill="none" stroke="#fff" strokeWidth="1.400" />
          </svg>
        </Task>
        <Task aria-label="Kodi">
          <svg width="22" height="22" viewBox="0 0 22 22">
            <path d="M11 0l11 11-11 11L0 11z" fill="#2fa8d8" />
            <path d="M7.500 4v13M8 12l7-8M9.500 11.500l7 5.500M2.500 13l4-4.500" stroke="#fff" strokeWidth="2" fill="none" />
          </svg>
        </Task>
        <Task $run $on $w={48} aria-label="Forgotten Construction Set"><Figure size={24} /></Task>
        <Tray>
          <TrayText $w={50}>Desktop</TrayText>
          <More>»</More>
          <TrayIcon $w={22}><svg width="12" height="7"><path d="M.5 6.500l5.500-5.500 5.500 5.500" fill="none" stroke="#fff" strokeWidth="1.300" /></svg></TrayIcon>
          <TrayIcon $w={24}><svg width="16" height="14" fill="none" stroke="#fff"><path d="M4.500 1.500h11v8h-9M.5 1.500h4v3h-4zM2.500 4.500v8h2M10.500 9.500v3M7 12.500h7" /></svg></TrayIcon>
          <TrayIcon $w={26}><svg width="17" height="14" fill="none" stroke="#fff"><path d="M.5 4.500h2l3.500-3v11l-3.500-3h-2zM8 5q1.500 2 0 4" /><path d="M10 3q3 4 0 8M12.500 1q4.500 6 0 12" stroke="#777" /></svg></TrayIcon>
          <TrayText $w={32}>ENG<br />INTL</TrayText>
          <TrayText $w={66} $center>14:58<br />23/11/2016</TrayText>
          <TrayIcon $w={50}><NoticeIcon width="16" height="16" fill="none" stroke="#fff"><path d="M.5 .5h15v11H10.500L8 15l-2.500-3.500H.5z" /></NoticeIcon></TrayIcon>
          <PeekLine />
        </Tray>
      </Taskbar>
    </Shell>
  );
}
